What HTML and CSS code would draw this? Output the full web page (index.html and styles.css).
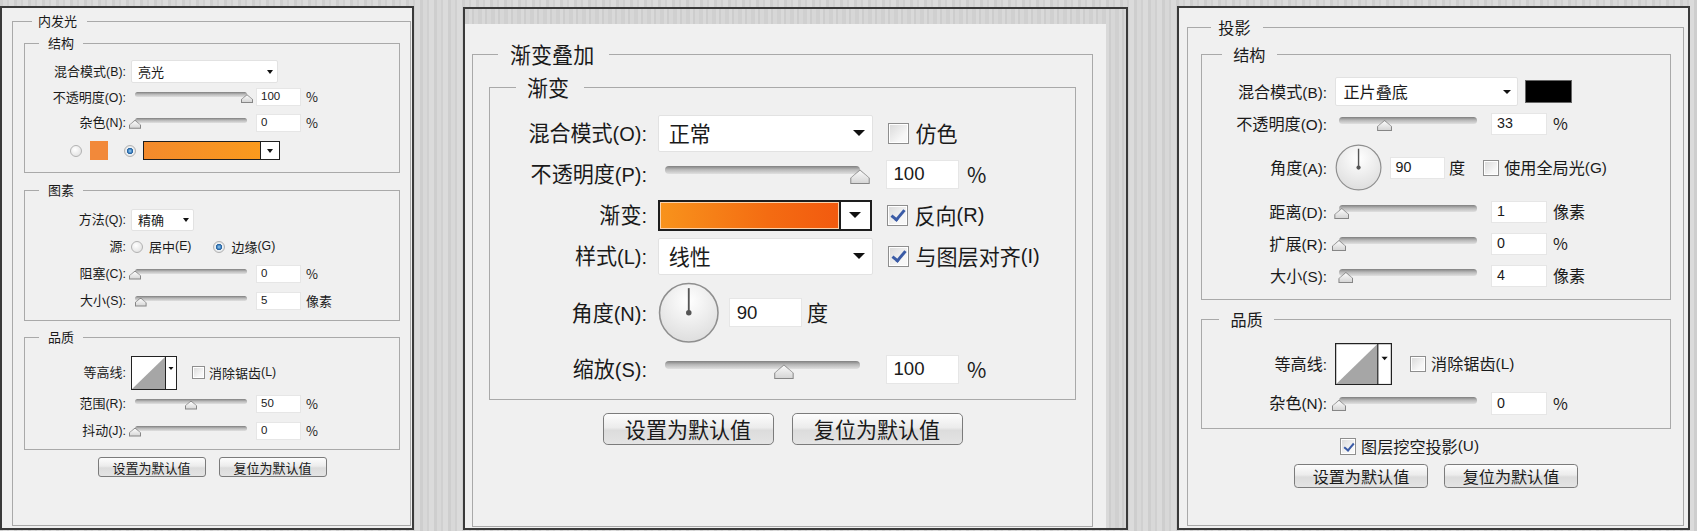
FILE: index.html
```html
<!DOCTYPE html>
<html lang="zh-CN">
  <head>
    <meta charset="UTF-8" />
    <meta name="viewport" content="width=device-width, initial-scale=1.0" />
    <title>图层样式</title>
    <link rel="stylesheet" href="styles.css">
  </head>
  <body>
    <!-- 内发光 -->
    <section class="panel panel-glow">
      <fieldset class="box box-main">
        <legend>内发光</legend>
        <fieldset class="box sec-struct">
          <legend>结构</legend>
          <div class="row">
            <span class="lab">混合模式<span class="key">(B):</span></span>
            <div class="select"><span>亮光</span><i class="caret"></i></div>
          </div>
          <div class="row">
            <span class="lab">不透明度<span class="key">(O):</span></span>
            <div class="slider"><div class="track"><i class="thumb" style="left: 100%"></i></div></div>
            <span class="num">100</span><span class="unit">%</span>
          </div>
          <div class="row">
            <span class="lab">杂色<span class="key">(N):</span></span>
            <div class="slider"><div class="track"><i class="thumb" style="left: 0%"></i></div></div>
            <span class="num">0</span><span class="unit">%</span>
          </div>
          <div class="row row-color">
            <i class="radio"></i>
            <span class="swatch"></span>
            <i class="radio on"></i>
            <div class="gradient"><span class="ramp"></span><span class="drop"><i class="caret"></i></span></div>
          </div>
        </fieldset>

        <fieldset class="box sec-elem">
          <legend>图素</legend>
          <div class="row">
            <span class="lab">方法<span class="key">(Q):</span></span>
            <div class="select select-short"><span>精确</span><i class="caret"></i></div>
          </div>
          <div class="row row-source">
            <span class="lab">源<span class="key">:</span></span>
            <label class="opt"><i class="radio"></i>居中<span class="key">(E)</span></label>
            <label class="opt"><i class="radio on"></i>边缘<span class="key">(G)</span></label>
          </div>
          <div class="row">
            <span class="lab">阻塞<span class="key">(C):</span></span>
            <div class="slider"><div class="track"><i class="thumb" style="left: 0%"></i></div></div>
            <span class="num">0</span><span class="unit">%</span>
          </div>
          <div class="row">
            <span class="lab">大小<span class="key">(S):</span></span>
            <div class="slider"><div class="track"><i class="thumb" style="left: 5%"></i></div></div>
            <span class="num">5</span><span class="unit">像素</span>
          </div>
        </fieldset>

        <fieldset class="box sec-quality">
          <legend>品质</legend>
          <div class="row row-contour">
            <span class="lab">等高线<span class="key">:</span></span>
            <svg class="contour" viewBox="0 0 46 34">
              <rect x="0.5" y="0.5" width="45" height="33" fill="#fff" stroke="#222" />
              <path d="M1 33 L34 1 V33 Z" fill="#a6a6a6" />
              <path d="M34.5 0 V34" stroke="#222" />
              <path d="M37.5 11 h5 l-2.5 3 z" fill="#111" />
            </svg>
            <label class="opt"><i class="check"></i>消除锯齿<span class="key">(L)</span></label>
          </div>
          <div class="row">
            <span class="lab">范围<span class="key">(R):</span></span>
            <div class="slider"><div class="track"><i class="thumb" style="left: 50%"></i></div></div>
            <span class="num">50</span><span class="unit">%</span>
          </div>
          <div class="row">
            <span class="lab">抖动<span class="key">(J):</span></span>
            <div class="slider"><div class="track"><i class="thumb" style="left: 0%"></i></div></div>
            <span class="num">0</span><span class="unit">%</span>
          </div>
        </fieldset>

        <div class="buttons">
          <button class="btn">设置为默认值</button>
          <button class="btn">复位为默认值</button>
        </div>
      </fieldset>
    </section>

    <!-- 渐变叠加 -->
    <section class="panel panel-grad">
      <div class="sheet">
        <fieldset class="box box-main">
          <legend>渐变叠加</legend>
          <fieldset class="box sec-grad">
            <legend>渐变</legend>
            <div class="row">
              <span class="lab">混合模式<span class="key">(O):</span></span>
              <div class="select"><span>正常</span><i class="caret"></i></div>
              <label class="opt"><i class="check"></i>仿色</label>
            </div>
            <div class="row">
              <span class="lab">不透明度<span class="key">(P):</span></span>
              <div class="slider"><div class="track"><i class="thumb" style="left: 100%"></i></div></div>
              <span class="num">100</span><span class="unit">%</span>
            </div>
            <div class="row">
              <span class="lab">渐变<span class="key">:</span></span>
              <div class="gradient"><span class="ramp"></span><span class="drop"><i class="caret"></i></span></div>
              <label class="opt"><i class="check on"></i>反向<span class="key">(R)</span></label>
            </div>
            <div class="row">
              <span class="lab">样式<span class="key">(L):</span></span>
              <div class="select"><span>线性</span><i class="caret"></i></div>
              <label class="opt"><i class="check on"></i>与图层对齐<span class="key">(I)</span></label>
            </div>
            <div class="row row-angle">
              <span class="lab">角度<span class="key">(N):</span></span>
              <svg class="dial" viewBox="0 0 40 40">
                <defs>
                  <radialGradient id="dialFillA" cx="0.5" cy="0.3" r="0.7">
                    <stop offset="0" stop-color="#ffffff" />
                    <stop offset="1" stop-color="#dedede" />
                  </radialGradient>
                </defs>
                <circle cx="20" cy="20" r="19" fill="url(#dialFillA)" stroke="#8f8f8f" />
                <path d="M20 20 V4" stroke="#555" stroke-width="1.2" />
                <circle cx="20" cy="20" r="1.8" fill="#555" />
              </svg>
              <span class="num num-angle">90</span><span class="unit unit-deg">度</span>
            </div>
            <div class="row">
              <span class="lab">缩放<span class="key">(S):</span></span>
              <div class="slider"><div class="track"><i class="thumb" style="left: 61%"></i></div></div>
              <span class="num">100</span><span class="unit">%</span>
            </div>
          </fieldset>

          <div class="buttons">
            <button class="btn">设置为默认值</button>
            <button class="btn">复位为默认值</button>
          </div>
        </fieldset>
      </div>
    </section>

    <!-- 投影 -->
    <section class="panel panel-shadow">
      <fieldset class="box box-main">
        <legend>投影</legend>
        <fieldset class="box sec-struct">
          <legend>结构</legend>
          <div class="row">
            <span class="lab">混合模式<span class="key">(B):</span></span>
            <div class="select"><span>正片叠底</span><i class="caret"></i></div>
            <span class="swatch swatch-black"></span>
          </div>
          <div class="row">
            <span class="lab">不透明度<span class="key">(O):</span></span>
            <div class="slider"><div class="track"><i class="thumb" style="left: 33%"></i></div></div>
            <span class="num">33</span><span class="unit">%</span>
          </div>
          <div class="row row-angle">
            <span class="lab">角度<span class="key">(A):</span></span>
            <svg class="dial" viewBox="0 0 40 40">
              <defs>
                <radialGradient id="dialFillB" cx="0.5" cy="0.3" r="0.7">
                  <stop offset="0" stop-color="#ffffff" />
                  <stop offset="1" stop-color="#dedede" />
                </radialGradient>
              </defs>
              <circle cx="20" cy="20" r="19" fill="url(#dialFillB)" stroke="#8f8f8f" />
              <path d="M20 20 V4" stroke="#555" stroke-width="1.2" />
              <circle cx="20" cy="20" r="1.8" fill="#555" />
            </svg>
            <span class="num num-angle">90</span><span class="unit unit-deg">度</span>
            <label class="opt"><i class="check"></i>使用全局光<span class="key">(G)</span></label>
          </div>
          <div class="row">
            <span class="lab">距离<span class="key">(D):</span></span>
            <div class="slider"><div class="track"><i class="thumb" style="left: 2%"></i></div></div>
            <span class="num">1</span><span class="unit">像素</span>
          </div>
          <div class="row">
            <span class="lab">扩展<span class="key">(R):</span></span>
            <div class="slider"><div class="track"><i class="thumb" style="left: 0%"></i></div></div>
            <span class="num">0</span><span class="unit">%</span>
          </div>
          <div class="row">
            <span class="lab">大小<span class="key">(S):</span></span>
            <div class="slider"><div class="track"><i class="thumb" style="left: 5%"></i></div></div>
            <span class="num">4</span><span class="unit">像素</span>
          </div>
        </fieldset>

        <fieldset class="box sec-quality">
          <legend>品质</legend>
          <div class="row row-contour">
            <span class="lab">等高线<span class="key">:</span></span>
            <svg class="contour" viewBox="0 0 46 34">
              <rect x="0.5" y="0.5" width="45" height="33" fill="#fff" stroke="#222" />
              <path d="M1 33 L34 1 V33 Z" fill="#a6a6a6" />
              <path d="M34.5 0 V34" stroke="#222" />
              <path d="M37.5 11 h5 l-2.5 3 z" fill="#111" />
            </svg>
            <label class="opt"><i class="check"></i>消除锯齿<span class="key">(L)</span></label>
          </div>
          <div class="row">
            <span class="lab">杂色<span class="key">(N):</span></span>
            <div class="slider"><div class="track"><i class="thumb" style="left: 0%"></i></div></div>
            <span class="num">0</span><span class="unit">%</span>
          </div>
        </fieldset>

        <div class="row row-knock">
          <label class="opt"><i class="check on"></i>图层挖空投影<span class="key">(U)</span></label>
        </div>
        <div class="buttons">
          <button class="btn">设置为默认值</button>
          <button class="btn">复位为默认值</button>
        </div>
      </fieldset>
    </section>
  </body>
</html>
```

FILE: styles.css
```css
* {
  box-sizing: border-box;
}
body {
  margin: 0;
  height: 531px;
  overflow: hidden;
  display: flex;
  align-items: flex-start;
  font-family: "Noto Sans CJK SC", "Noto Sans", sans-serif;
  color: #1a1a1a;
  background-color: #d4d4d4;
  background-image: repeating-linear-gradient(90deg, #cecece 0 3px, #d8d8d8 3px 7px, #d0d0d0 7px 9px, #dbdbdb 9px 14px);
}

/* panels: --u scales every control, the rest is per panel */
.panel {
  --u: 1px;
  display: flex;
  flex-direction: column;
  flex: none;
  border: 2px solid #3a3a3a;
  background: #f0f0f0;
  font-size: calc(13 * var(--u));
  line-height: 1.2;
}
.panel-glow {
  --lab: 101px;
  --gap: 5px;
  --sel: 147px;
  --sl: 120px;
  --sl-l: 4px;
  --sl-r: 4px;
  --ngap: 5px;
  --optgap: 15px;
  width: 414px;
  height: 524px;
  margin-top: 6px;
  padding: 5px 1px 2px 10px;
}
.panel-grad {
  --u: 1.62px;
  --lab: 157px;
  --gap: 11px;
  --sel: 215px;
  --sl: 215px;
  --sl-l: 7px;
  --sl-r: 13px;
  --ngap: 13px;
  --optgap: 15px;
  width: 665px;
  height: 523px;
  margin: 7px 0 0 49px;
  padding: 15px 20px 0 0;
  background-color: #d3d3d3;
  background-image: repeating-linear-gradient(90deg, #d0d0d0 0 4px, #d9d9d9 4px 7px, #cdcdcd 7px 9px, #d7d7d7 9px 13px);
}
.panel-shadow {
  --u: 1.24px;
  --lab: 125px;
  --gap: 8px;
  --sel: 183px;
  --sl: 149px;
  --sl-l: 4px;
  --sl-r: 7px;
  --ngap: 7px;
  --optgap: 18px;
  width: 513px;
  height: 524px;
  margin: 6px 0 0 49px;
  padding: 10px 4px 2px 8px;
}
.sheet {
  flex: 1;
  display: flex;
  flex-direction: column;
  background: #f0f0f0;
  padding: 18px 13px 1px 7px;
}

/* group boxes */
.box {
  margin: 0;
  padding: 0;
  min-width: 0;
  border: 1px solid #a9a9a9;
}
.box > legend {
  line-height: calc(16 * var(--u));
  margin-left: calc(14 * var(--u));
  padding: 0 calc(9 * var(--u));
}
.box-main {
  flex: 1;
}
.box-main > legend {
  margin-left: calc(8 * var(--u));
  padding: 0 calc(10 * var(--u)) 0 calc(6 * var(--u));
}

.panel-glow .box-main {
  padding: 6px 10px 0 11px;
}
.panel-glow .sec-struct {
  --row: 25.5px;
  padding: 8px 0 6.5px;
}
.panel-glow .sec-elem {
  --row: 27px;
  margin-top: 9px;
  padding: 8px 0 6px;
}
.panel-glow .sec-quality {
  --row: 27px;
  margin-top: 8px;
  padding: 10px 0 5px;
}
.panel-glow .row-contour {
  height: 35px;
}

.panel-grad .box-main {
  padding: 7px 16px 0 16px;
}
.panel-grad .box-main > legend {
  margin-left: 9px;
  padding: 0 15px 0 12px;
}
.panel-grad .sec-grad {
  --row: 41px;
  padding: 12px 0 9px;
}
.panel-grad .sec-grad > legend {
  margin-left: 26px;
  padding: 0 15px 0 11px;
}
.panel-grad .row-angle {
  height: 72px;
}

.panel-shadow .box-main {
  padding: 7px 12px 0 13px;
}
.panel-shadow .sec-struct {
  --row: 32px;
  padding: 11px 0 7px;
}
.panel-shadow .sec-struct > legend {
  margin-left: 20px;
}
.panel-shadow .sec-quality {
  --row: 32px;
  margin-top: 10px;
  padding: 11px 0 8px;
}
.panel-shadow .row-angle {
  height: 56px;
}
.panel-shadow .row-contour {
  height: 47px;
}

/* rows */
.row {
  display: flex;
  align-items: center;
  height: var(--row);
  white-space: nowrap;
}
.lab {
  flex: none;
  width: var(--lab);
  margin-right: var(--gap);
  text-align: right;
}
.key {
  font-family: "Liberation Sans", sans-serif;
  font-size: 0.95em;
}
.row-color {
  height: 30px;
  padding-left: 45px;
}
.row-knock {
  height: 32px;
  margin-top: 2px;
  padding-left: 139px;
}
.row > .opt {
  margin-left: var(--optgap);
}
.row-source > .opt:first-of-type,
.row-knock > .opt {
  margin-left: 0;
}
.row-source > .opt + .opt {
  margin-left: 22px;
}

/* controls */
.select {
  flex: none;
  display: flex;
  align-items: center;
  justify-content: space-between;
  width: var(--sel);
  height: calc(23 * var(--u));
  padding: 0 calc(4.5 * var(--u)) 0 calc(6 * var(--u));
  background: #fff;
  border: 1px solid #e2e2e2;
  border-radius: 2px;
}
.select-short {
  width: 63px;
  height: 22px;
}
.caret {
  width: 0;
  height: 0;
  border-left: calc(3.8 * var(--u)) solid transparent;
  border-right: calc(3.8 * var(--u)) solid transparent;
  border-top: calc(4 * var(--u)) solid #111;
}
.slider {
  flex: none;
  width: var(--sl);
  height: calc(12 * var(--u));
  padding: calc(1 * var(--u)) var(--sl-r) 0 var(--sl-l);
}
.track {
  position: relative;
  height: calc(5 * var(--u));
  border-radius: calc(3 * var(--u));
  background: linear-gradient(#7f7f7f, #b8b8b8 45%, #e0e0e0);
}
.thumb {
  position: absolute;
  top: calc(2 * var(--u));
  width: calc(12 * var(--u));
  height: calc(9 * var(--u));
  margin-left: calc(-6 * var(--u));
  background: #868686;
  clip-path: polygon(50% 0, 100% 58%, 100% 100%, 0 100%, 0 58%);
}
.thumb::after {
  content: "";
  position: absolute;
  inset: 1px;
  background: linear-gradient(#fbfbfb, #d6d6d6);
  clip-path: polygon(50% 0, 100% 58%, 100% 100%, 0 100%, 0 58%);
}
.num {
  flex: none;
  display: flex;
  align-items: center;
  width: calc(45 * var(--u));
  height: calc(18 * var(--u));
  margin-left: var(--ngap);
  padding-left: calc(4 * var(--u));
  background: #fff;
  border: 1px solid #e6e6e6;
  font-family: "Liberation Sans", sans-serif;
  font-size: calc(11.5 * var(--u));
}
.num-angle {
  margin-left: calc(6 * var(--u));
}
.unit {
  margin-left: calc(5 * var(--u));
}
.unit-deg {
  margin-left: calc(3 * var(--u));
}
.swatch {
  flex: none;
  width: 18px;
  height: 19px;
  margin: 0 16px 0 8px;
  background: #f2893a;
}
.swatch-black {
  width: calc(38 * var(--u));
  height: calc(18.5 * var(--u));
  margin: 0 0 0 7px;
  background: #000;
  border: 1px solid #666;
}
.gradient {
  flex: none;
  display: flex;
  width: 137px;
  height: calc(19 * var(--u));
  margin-left: 7px;
  background: #fff;
  border: calc(1.5 * var(--u)) solid #1e1e1e;
}
.gradient .ramp {
  flex: 1;
  background: linear-gradient(90deg, #f38a2c, #fa9a1d);
  border-right: calc(1.5 * var(--u)) solid #1e1e1e;
}
.gradient .drop {
  display: flex;
  align-items: center;
  justify-content: center;
  width: calc(18 * var(--u));
}
.panel-grad .gradient {
  width: 214px;
  margin-left: 0;
}
.panel-grad .gradient .ramp {
  background: linear-gradient(90deg, #f8931c, #f46c12 60%, #f25a0f);
  box-shadow: inset 0 0 0 1px #fbd3ad;
}
.radio {
  flex: none;
  display: inline-block;
  width: calc(12 * var(--u));
  height: calc(12 * var(--u));
  border-radius: 50%;
  border: 1px solid #b2b2b2;
  background: radial-gradient(circle at 40% 35%, #ffffff, #dcdcdc);
}
.radio.on {
  background: radial-gradient(circle, #9fd0f0 0, #2f74b8 32%, #1e5a96 40%, #eef2f5 48%, #d8d8d8 100%);
}
.opt {
  display: flex;
  align-items: center;
}
.opt .radio,
.opt .check {
  margin-right: calc(4 * var(--u));
}
.row-source .opt .radio {
  margin-right: calc(6 * var(--u));
}
.check {
  flex: none;
  position: relative;
  display: inline-block;
  width: calc(13 * var(--u));
  height: calc(13 * var(--u));
  border: 1px solid #8e8e8e;
  background: linear-gradient(135deg, #d9d9d9, #f7f7f7 70%);
  box-shadow: inset 0 0 0 1px #fff;
}
.check.on::after {
  content: "";
  position: absolute;
  left: 34%;
  top: 8%;
  width: 28%;
  height: 58%;
  border-right: calc(2 * var(--u)) solid #3a5ba6;
  border-bottom: calc(2 * var(--u)) solid #3a5ba6;
  transform: rotate(40deg);
}
.contour {
  flex: none;
  width: calc(46 * var(--u));
  height: calc(34 * var(--u));
}
.dial {
  flex: none;
  width: calc(38 * var(--u));
  height: calc(38 * var(--u));
}

/* buttons */
.buttons {
  display: flex;
  justify-content: center;
  gap: calc(13 * var(--u));
  margin-top: 7px;
}
.panel-grad .buttons {
  gap: 18px;
  margin-top: 13px;
}
.panel-shadow .buttons {
  margin-top: 1px;
}
.btn {
  width: calc(108 * var(--u));
  height: calc(20 * var(--u));
  padding: 0;
  font: inherit;
  color: #1a1a1a;
  line-height: 1;
  border: 1px solid #7b7b7b;
  border-radius: calc(3 * var(--u));
  background: linear-gradient(#fdfdfd, #ececec 45%, #dcdcdc 55%, #e4e4e4);
}
.panel-grad .btn {
  width: 171px;
}
```
